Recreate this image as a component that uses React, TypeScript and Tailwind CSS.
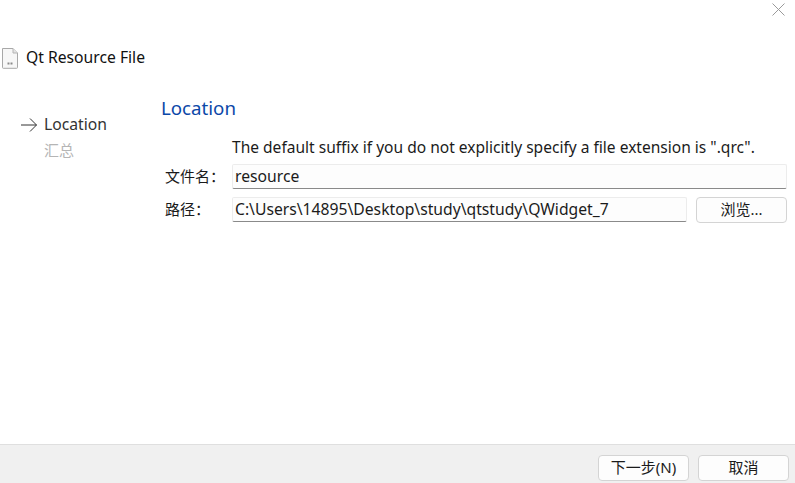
const font = "font-['Noto_Sans','Noto_Sans_CJK_SC',sans-serif]";

function FileIcon() {
  return (
    <svg width="18" height="21" viewBox="0 0 18 21" fill="none">
      <path d="M1.5 0.5H12L16.5 5V19.5a0.8 0.8 0 0 1-0.8 0.8H2.3a0.8 0.8 0 0 1-0.8-0.8Z" fill="#f7f7f7" stroke="#a8a8a8" />
      <path d="M12 0.5V5H16.5" fill="#e4e4e4" stroke="#b4b4b4" />
      <path d="M6.5 14.5h2v2h-2ZM9.5 14.5h2v2h-2Z" fill="#8a8a8a" />
    </svg>
  );
}

function Field({ label, value, children }: { label: string; value: string; children?: React.ReactNode }) {
  return (
    <div className="flex items-center h-[25px]">
      <div className="w-[71px] pl-[4px] text-[15px] text-[#1b1b1b]">{label}</div>
      <div className="flex-1 h-[25px] flex items-center bg-[#fdfdfd] border border-[#ececec] border-b-[#8a8a8a] rounded-[2px] pl-[2px] text-[15.7px] text-[#1b1b1b] whitespace-nowrap">
        {value}
      </div>
      {children}
    </div>
  );
}

function Button({ label, className }: { label: string; className: string }) {
  return (
    <button className={`h-[26px] flex items-center justify-center bg-[#fdfdfd] border border-[#d4d4d4] rounded-[4px] text-[15px] text-[#1b1b1b] ${className}`}>
      {label}
    </button>
  );
}

export default function App() {
  return (
    <div className={`w-[795px] h-[483px] bg-white flex flex-col overflow-hidden ${font}`}>
      <div className="h-[18px] flex justify-end pr-[10px] pt-[3px]">
        <svg width="13" height="13" viewBox="0 0 13 13" stroke="#9a9a9a" strokeWidth="1">
          <path d="M0.5 0.5L12.5 12.5M12.5 0.5L0.5 12.5" />
        </svg>
      </div>

      <div className="flex items-center h-[24px] mt-[28px] pl-px">
        <FileIcon />
        <span className="ml-[7px] text-[15.7px] text-[#111]">Qt Resource File</span>
      </div>

      <div className="flex flex-1 mt-[25px]">
        <div className="w-[161px] pt-[18px]">
          <div className="flex items-center h-[24px] pl-[20px]">
            <svg width="18" height="16" viewBox="0 0 18 16" fill="none" stroke="#333" strokeWidth="1">
              <path d="M1 8H16.5M10 1.5L16.5 8L10 14.5" />
            </svg>
            <span className="ml-[6px] text-[15.7px] text-[#333]">Location</span>
          </div>
          <div className="pl-[44px] mt-[3px] text-[15px] leading-[20px] text-[#b5b5b5]">汇总</div>
        </div>

        <div className="flex-1 pr-[8px]">
          <div className="text-[18.7px] leading-[26px] text-[#0b48a8]">Location</div>
          <div className="pl-[71px] mt-[16px] text-[15.55px] leading-[20px] text-[#1b1b1b] whitespace-nowrap">
            The default suffix if you do not explicitly specify a file extension is ".qrc".
          </div>
          <div className="mt-[7px] flex flex-col gap-[8px]">
            <Field label="文件名：" value="resource" />
            <Field label="路径：" value="C:\Users\14895\Desktop\study\qtstudy\QWidget_7">
              <Button label="浏览..." className="w-[91px] ml-[9px]" />
            </Field>
          </div>
        </div>
      </div>

      <div className="h-[39px] bg-[#f0f0f0] border-t border-[#dfdfdf] flex justify-end items-start pt-[10px] gap-[9px] pr-[6px]">
        <Button label="下一步(N)" className="w-[91px] pb-[2px]" />
        <Button label="取消" className="w-[91px] pb-[2px]" />
      </div>
    </div>
  );
}
